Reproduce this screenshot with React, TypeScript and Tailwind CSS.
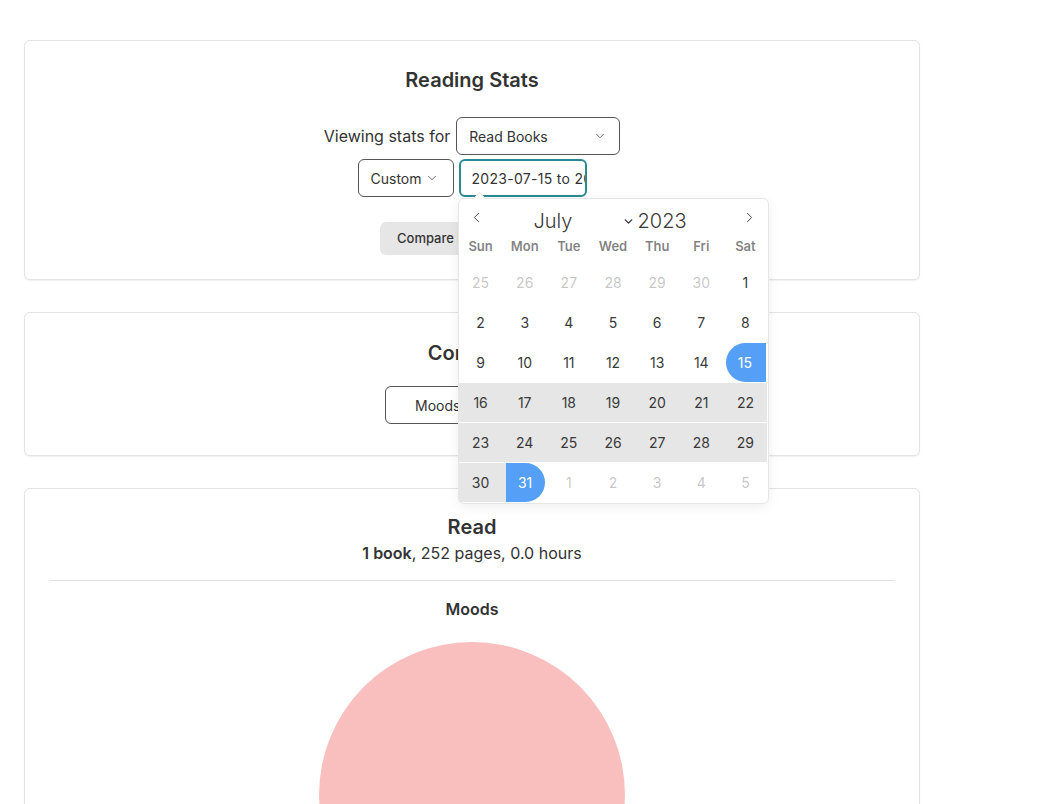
import { ChevronDown, ChevronLeft, ChevronRight } from "lucide-react";

const font = { fontFamily: "Inter, 'Noto Sans', sans-serif" };

const weekdays = ["Sun", "Mon", "Tue", "Wed", "Thu", "Fri", "Sat"];

type Day = { n: number; muted?: boolean };

const days: Day[] = [
  ...[25, 26, 27, 28, 29, 30].map((n) => ({ n, muted: true })),
  ...Array.from({ length: 31 }, (_, i) => ({ n: i + 1 })),
  ...[1, 2, 3, 4, 5].map((n) => ({ n, muted: true })),
];

const rangeStart = 15;
const rangeEnd = 31;

function DayCell({ day }: { day: Day }) {
  if (!day.muted && day.n === rangeStart) {
    return (
      <div className="flex h-[39px] pl-[3px] pr-px">
        <div className="flex flex-1 items-center justify-center rounded-l-full bg-[#569ff7] pr-[3px] text-white">
          {day.n}
        </div>
      </div>
    );
  }
  if (!day.muted && day.n === rangeEnd) {
    return (
      <div className="flex h-[39px]">
        <div className="w-[3px] bg-[#e6e6e6]" />
        <div className="flex w-[39px] items-center justify-center rounded-r-full bg-[#569ff7] text-white">
          {day.n}
        </div>
      </div>
    );
  }
  const inRange = !day.muted && day.n > rangeStart && day.n < rangeEnd;
  return (
    <div
      className={`flex h-[39px] items-center justify-center ${
        inRange ? "bg-[#e6e6e6]" : ""
      } ${day.muted ? "text-[#393939]/30" : "text-[#393939]"}`}
    >
      {day.n}
    </div>
  );
}

function Calendar() {
  return (
    <div className="absolute left-0 top-[40px] z-10 w-[309px] rounded-[5px] bg-white shadow-[1px_0_0_#e6e6e6,-1px_0_0_#e6e6e6,0_1px_0_#e6e6e6,0_-1px_0_#e6e6e6,0_3px_13px_rgba(0,0,0,0.08)]">
      <div className="absolute -top-[5px] left-[16px] h-[9px] w-[9px] rotate-45 border-l border-t border-[#e6e6e6] bg-white" />
      <div className="relative flex h-[38px] text-[#393939]">
        <ChevronLeft className="ml-[9px] mt-[10px] h-[17px] w-[17px]" strokeWidth={1.3} />
        <div className="ml-[49px] mt-[8px] flex h-[28px] items-center text-[20px] font-light">
          <span className="w-[88px]">July</span>
          <ChevronDown className="h-[13px] w-[13px]" strokeWidth={2.5} />
          <span className="ml-[3px]">2023</span>
        </div>
        <ChevronRight className="ml-auto mr-[10px] mt-[10px] h-[17px] w-[17px]" strokeWidth={1.3} />
      </div>
      <div className="grid h-[19px] grid-cols-7 items-center text-[13px] font-semibold text-black/50">
        {weekdays.map((w) => (
          <div key={w} className="text-center">
            {w}
          </div>
        ))}
      </div>
      <div className="grid grid-cols-7 gap-y-px pb-px pt-[7px] text-[14px]">
        {days.map((d, i) => (
          <DayCell key={i} day={d} />
        ))}
      </div>
    </div>
  );
}

function Card({ children, className = "" }: { children: React.ReactNode; className?: string }) {
  return (
    <section
      className={`rounded-md border border-[#e3e3e3] bg-white shadow-[0_1px_2px_rgba(0,0,0,0.06)] ${className}`}
    >
      {children}
    </section>
  );
}

export default function App() {
  return (
    <div className="min-h-screen bg-white px-6 pt-10 text-[#333]" style={font}>
      <div className="flex w-[896px] flex-col gap-8">
        <Card className="px-6 pb-[24px] pt-[24px]">
          <h1 className="text-center text-[20px] font-semibold leading-[30px]">Reading Stats</h1>
          <div className="mt-[22px] flex items-center justify-center gap-[6px]">
            <span className="text-[16px]">Viewing stats for</span>
            <div className="flex h-[38px] w-[164px] items-center justify-between rounded-md border border-[#555] pl-[12px] pr-[12px] text-[14px]">
              Read Books
              <ChevronDown className="h-[14px] w-[14px] text-[#555]" strokeWidth={1.5} />
            </div>
          </div>
          <div className="mt-[4px] flex items-center justify-center gap-[5px]">
            <div className="flex h-[38px] w-[96px] items-center rounded-md border border-[#555] pl-[12px] text-[14px]">
              Custom
              <ChevronDown className="ml-[3px] h-[14px] w-[14px] text-[#555]" strokeWidth={1.5} />
            </div>
            <div className="relative">
              <div className="flex h-[38px] w-[128px] items-center overflow-hidden whitespace-nowrap rounded-md border-2 border-[#2a8a91] pl-[11px] text-[14px] tracking-[0.3px]">
                2023-07-15 to 2023-07-31
              </div>
              <Calendar />
            </div>
          </div>
          <div className="mt-[25px] flex justify-center">
            <button className="h-[33px] w-[184px] rounded-md bg-[#e6e6e6] pl-[17px] text-left text-[13px] font-medium">
              Compare Periods
            </button>
          </div>
        </Card>

        <Card className="px-6 pb-[31px] pt-[25px]">
          <h2 className="text-center text-[20px] font-semibold leading-[30px]">Compare</h2>
          <div className="mt-[18px] flex justify-center">
            <div className="flex h-[38px] w-[174px] items-center justify-between rounded-md border border-[#555] px-[29px] text-[14px]">
              Moods
              <ChevronDown className="h-[14px] w-[14px] text-[#555]" strokeWidth={1.5} />
            </div>
          </div>
        </Card>

        <Card className="px-6 pt-[23px]">
          <h2 className="text-center text-[20px] font-semibold leading-[30px]">Read</h2>
          <p className="text-center text-[16px] leading-[22px]">
            <span className="font-semibold">1 book</span>, 252 pages, 0.0 hours
          </p>
          <hr className="mt-[16px] border-[#e3e3e3]" />
          <h3 className="mt-[16px] text-center text-[16px] font-semibold leading-[24px]">Moods</h3>
          <div className="mt-[21px] flex justify-center">
            <svg width="306" height="306" viewBox="0 0 306 306">
              <circle cx="153" cy="153" r="153" fill="#f9bfbf" />
            </svg>
          </div>
        </Card>
      </div>
    </div>
  );
}
